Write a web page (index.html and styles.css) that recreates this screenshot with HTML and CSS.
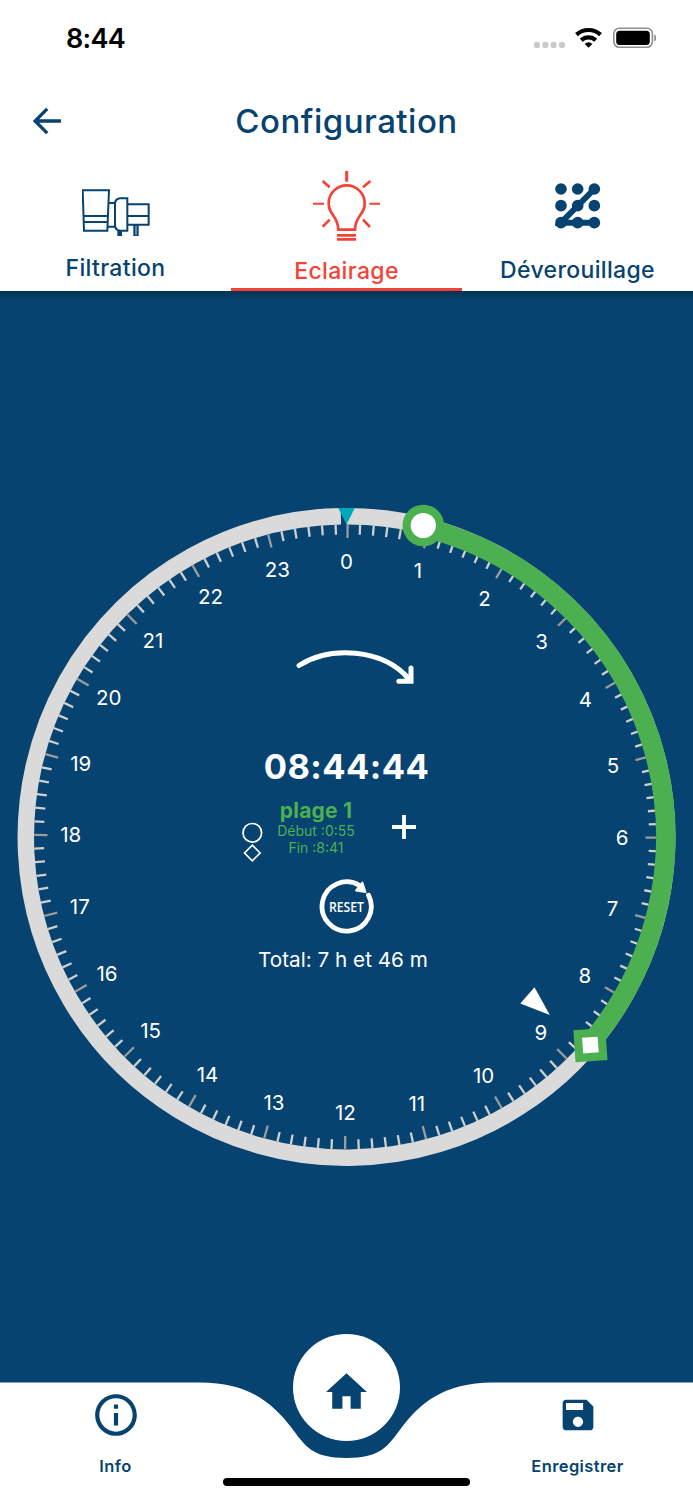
FILE: index.html
```
<!DOCTYPE html>
<html lang="fr">
<head>
  <meta charset="UTF-8">
  <title>Configuration</title>
  <link rel="stylesheet" href="styles.css">
</head>
<body>
  <div class="status-bar">
    <span class="status-time">8:44</span>
    <svg class="status-icons" width="126" height="26" viewBox="0 0 126 26">
      <g fill="#c9c9cb">
        <rect x="4" y="17" width="6" height="6" rx="2"/>
        <rect x="12.3" y="17" width="6" height="6" rx="2"/>
        <rect x="20.6" y="17" width="6" height="6" rx="2"/>
        <rect x="28.9" y="17" width="6" height="6" rx="2"/>
      </g>
      <g fill="none" stroke="#000" stroke-width="4.2">
        <path d="M46.5 9.6a18 18 0 0 1 24 0"/>
        <path d="M51.3 15.3a10.5 10.5 0 0 1 14.4 0"/>
      </g>
      <path d="M58.5 22.8l-3.8-3.9a5.4 5.4 0 0 1 7.6 0z"/>
      <rect x="83.8" y="3.3" width="38.6" height="19" rx="5.5" fill="none" stroke="#8e8e8e" stroke-width="1.6"/>
      <rect x="86.2" y="5.8" width="33.6" height="14.2" rx="3.5"/>
      <path d="M124.3 9.5c3 1.2 3 5.8 0 7z" fill="#8e8e8e"/>
    </svg>
  </div>

  <header class="header">
    <svg class="back" width="28" height="28" viewBox="0 0 28 28">
      <path d="M28 14H2.5M14.2 1.8L2 14l12.2 12.2" fill="none" stroke="currentColor" stroke-width="3.3"/>
    </svg>
    <h1>Configuration</h1>
  </header>

  <nav class="tabs">
    <a class="tab tab-filtration">
      <svg width="68" height="50" viewBox="96 86 204 150">
        <g fill="none" stroke="currentColor" stroke-width="6">
          <path d="M98 93h79l-5 121h-70zM100 170h74M101 188h72"/>
          <path d="M176 131h19M172 202h24"/>
          <path d="M232 117v97h-22q-15-2-15-18v-62q0-15 15-17z"/>
          <path d="M232 135h64v61h-64M232 170h64"/>
        </g>
        <path d="M202 214h14v16h-14zM250 196h16v34h-16z" fill="currentColor"/>
        <path d="M258 200v26" stroke="#7c9cb5" stroke-width="5"/>
      </svg>
      <span>Filtration</span>
    </a>
    <a class="tab tab-eclairage">
      <svg width="68" height="72" viewBox="69 28 204 216">
        <g fill="none" stroke="currentColor" stroke-width="8">
          <path d="M145 207C144 185 137 174 129 163C121 152 116 145 116 128A54 54 0 0 1 224 128C224 145 219 152 211 163C203 174 195 185 195 207Z"/>
          <path d="M141 224h57M141 236h57"/>
          <path d="M170 31v32" stroke-width="9"/>
          <path d="M98 61l21 19M241 61l-22 19M98 198l21-21M240 199l-21-22"/>
          <path d="M69 129h33M238 129h32" stroke-width="6"/>
        </g>
      </svg>
      <span>Eclairage</span>
    </a>
    <a class="tab tab-lock">
      <svg width="46" height="46" viewBox="794 68 138 138">
        <path d="M912 86L812 187H912" fill="none" stroke="currentColor" stroke-width="18"/>
        <g fill="currentColor">
          <circle cx="812" cy="86" r="17.5"/><circle cx="862" cy="86" r="17.5"/><circle cx="912" cy="86" r="17.5"/>
          <circle cx="812" cy="136" r="17.5"/><circle cx="862" cy="136" r="17.5"/><circle cx="912" cy="136" r="17.5"/>
          <circle cx="812" cy="187" r="17.5"/><circle cx="862" cy="187" r="17.5"/><circle cx="912" cy="187" r="17.5"/>
        </g>
      </svg>
      <span>Déverouillage</span>
    </a>
  </nav>

  <main class="main">
    <svg class="dial" width="693" height="693" viewBox="0 490 693 693">
      <path id="track" fill="none" stroke="#dadada" stroke-width="16.5"/>
      <g id="ticks"></g>
      <path id="range" fill="none" stroke="#4caf50" stroke-width="19.5"/>
      <g id="numbers" class="numbers"></g>
      <path d="M338.2 508h16.6l-8.2 16.5z" fill="#00a9b7"/>
      <circle cx="423.3" cy="525.5" r="20.8" fill="#4caf50"/>
      <circle cx="423.3" cy="525.5" r="12.6" fill="#fff"/>
      <g transform="translate(590.4 1045.1) rotate(-4)">
        <rect x="-16" y="-16" width="32" height="32" fill="#4caf50"/>
        <rect x="-7.8" y="-7.8" width="15.6" height="15.6" fill="#fff"/>
      </g>
      <path d="M534.5 987.3L520.3 1003.6L549.8 1015z" fill="#fff"/>
    </svg>

    <section class="info">
      <svg class="direction" width="120" height="38" viewBox="296 648 120 38">
        <path d="M299 665.5C330 646 382 648 409 679M411 668v13.3h-12.2" fill="none" stroke="#fff" stroke-width="5" stroke-linecap="round"/>
      </svg>
      <div class="time">08:44:44</div>
      <div class="range-row">
        <svg class="legend" width="22" height="40" viewBox="0 0 22 40">
          <g fill="none" stroke="#fff" stroke-width="1.7">
            <circle cx="11.3" cy="10.8" r="9.3"/>
            <path d="M11.3 23.2l7.8 7.8-7.8 7.8L3.5 31z"/>
          </g>
        </svg>
        <div class="range">
          <strong>plage 1</strong>
          <span>Début :0:55</span>
          <span>Fin :8:41</span>
        </div>
        <svg class="plus" width="24" height="24" viewBox="0 0 24 24">
          <path d="M12 0v24M0 12h24" stroke="#fff" stroke-width="3.8"/>
        </svg>
      </div>
      <svg class="reset" width="56" height="56" viewBox="0 0 56 56">
        <path d="M49.5 16.2A24.6 24.6 0 1 1 40.5 6.5" fill="none" stroke="#fff" stroke-width="4.8" stroke-linecap="round"/>
        <path d="M43.3 3.5L46.5 13L37 11.5z" fill="#fff" stroke="#fff" stroke-width="2" stroke-linejoin="round"/>
        <text x="27.5" y="33" text-anchor="middle" textLength="35" lengthAdjust="spacingAndGlyphs">RESET</text>
      </svg>
      <div class="total">Total: 7 h et 46 m</div>
    </section>
  </main>

  <footer class="bottom-bar">
    <svg class="bar-shape" width="693" height="180" viewBox="0 0 693 180">
      <path d="M0 62.5H200C250 62.5 273 84 291 107C305 126 312 138 346.5 138C381 138 388 126 402 107C420 84 443 62.5 493 62.5H693V180H0z" fill="#fff"/>
      <circle cx="346.5" cy="67.5" r="53.5" fill="#fff"/>
    </svg>
    <div class="bar-items">
      <a class="bar-item">
        <svg width="50" height="50" viewBox="0 0 24 24" fill="currentColor"><path d="M11 7h2v2h-2zm0 4h2v6h-2zm1-9C6.48 2 2 6.48 2 12s4.48 10 10 10 10-4.48 10-10S17.52 2 12 2zm0 18c-4.41 0-8-3.59-8-8s3.59-8 8-8 8 3.59 8 8-3.59 8-8 8z"/></svg>
        <span>Info</span>
      </a>
      <a class="bar-item home">
        <svg width="49" height="50" viewBox="0 0 24 24" preserveAspectRatio="none" fill="currentColor"><path d="M10 20v-6h4v6h5v-8h3L12 3 2 12h3v8z"/></svg>
      </a>
      <a class="bar-item">
        <svg width="50" height="50" viewBox="-2.65 -2.65 29.3 29.3" fill="currentColor"><path d="M17 3H5c-1.11 0-2 .9-2 2v14c0 1.1.89 2 2 2h14c1.1 0 2-.9 2-2V7l-4-4zm-5 16c-1.66 0-3-1.34-3-3s1.34-3 3-3 3 1.34 3 3-1.34 3-3 3zm3-10H5V5h10v4z"/></svg>
        <span>Enregistrer</span>
      </a>
    </div>
    <div class="home-indicator"></div>
  </footer>

  <script src="dial.js"></script>
</body>
</html>
```
FILE: styles.css
```
* {
  box-sizing: border-box;
}

body {
  margin: 0;
  width: 693px;
  height: 1500px;
  overflow: hidden;
  display: flex;
  flex-direction: column;
  background-color: white;
  color: #064370;
  font-family: Inter, "Liberation Sans", sans-serif;
}

svg {
  display: block;
}

.status-bar {
  height: 76px;
  padding: 25px 37px 0 66px;
  display: flex;
  justify-content: space-between;
}

.status-time {
  color: black;
  font-size: 27px;
  line-height: 27px;
  font-weight: 600;
  letter-spacing: -0.7px;
}

.header {
  height: 89px;
  display: grid;
  grid-template-columns: 100px 1fr 100px;
  align-items: center;
}

.back {
  margin-left: 33px;
}

.header h1 {
  margin: 0;
  text-align: center;
  font-size: 33px;
  font-weight: 450;
  letter-spacing: 0.5px;
}

.tabs {
  height: 126px;
  display: grid;
  grid-template-columns: repeat(3, 1fr);
}

.tab {
  display: flex;
  flex-direction: column;
  align-items: center;
  font-size: 23px;
  line-height: 28px;
  font-weight: 450;
  letter-spacing: 0.35px;
}

.tab-filtration {
  padding-top: 23px;
  gap: 16px;
}

.tab-eclairage {
  padding-top: 5px;
  gap: 15px;
  color: #f44336;
  border-bottom: 3px solid #f44336;
}

.tab-lock {
  padding-top: 18px;
  gap: 27px;
}

.main {
  height: 1091px;
  padding-top: 199px;
  display: grid;
  align-items: start;
  color: white;
  background: linear-gradient(rgba(0, 0, 0, 0.25), transparent 10px) #064370;
}

/* the dial and the texts in its middle share one cell */
.dial,
.info {
  grid-area: 1 / 1;
}

.numbers {
  fill: white;
  font-size: 20.5px;
  text-anchor: middle;
}

.info {
  padding-top: 158px;
  display: flex;
  flex-direction: column;
  align-items: center;
}

.direction {
  margin-left: 19px;
}

.time {
  margin-top: 61px;
  font-size: 34.5px;
  line-height: 40px;
  font-weight: 700;
  letter-spacing: 0.4px;
}

.range-row {
  margin-top: 12px;
  width: 211px;
  height: 60px;
  display: flex;
}

.legend {
  margin-top: 23px;
}

.range {
  width: 106px;
  display: flex;
  flex-direction: column;
  align-items: center;
  color: #4caf50;
  font-size: 14px;
  line-height: 16.5px;
}

.range strong {
  font-size: 21px;
  line-height: 24px;
  letter-spacing: 0.2px;
}

.plus {
  margin: 16px 0 0 23px;
}

.reset {
  margin-top: 20px;
}

.reset text {
  fill: white;
  font-family: "Open Sans", sans-serif;
  font-size: 14px;
  font-weight: 600;
}

.total {
  margin-top: 11px;
  margin-right: 7px;
  font-size: 20.7px;
  line-height: 28px;
}

.bottom-bar {
  height: 180px;
  margin-top: -62px;
  flex-shrink: 0;
  display: grid;
  background-color: #064370;
}

.bar-shape,
.bar-items,
.home-indicator {
  grid-area: 1 / 1;
}

.bar-items {
  display: grid;
  grid-template-columns: repeat(3, 1fr);
  padding-top: 70px;
}

.bar-item {
  display: flex;
  flex-direction: column;
  align-items: center;
  gap: 16px;
  font-size: 16.5px;
  line-height: 20px;
  font-weight: 600;
  letter-spacing: 0.4px;
}

.home {
  margin-top: -23px;
}

.home-indicator {
  align-self: end;
  justify-self: center;
  width: 247px;
  height: 8px;
  margin-bottom: 14px;
  border-radius: 4px;
  background-color: black;
}
```
FILE: dial.js
```
const CX = 346.5;
const CY = 837;
const SVG_NS = "http://www.w3.org/2000/svg";

function point(deg, radius) {
  const rad = deg * Math.PI / 180;
  return [CX + radius * Math.sin(rad), CY - radius * Math.cos(rad)];
}

function arc(from, to, radius) {
  const [x1, y1] = point(from, radius);
  const [x2, y2] = point(to, radius);
  const large = to - from > 180 ? 1 : 0;
  return `M${x1} ${y1}A${radius} ${radius} 0 ${large} 1 ${x2} ${y2}`;
}

function timeToDeg(hours, minutes) {
  return (hours + minutes / 60) * 15;
}

document.getElementById("track").setAttribute("d", arc(0, 359, 320.7));
document.getElementById("range").setAttribute("d", arc(timeToDeg(0, 55), timeToDeg(8, 41), 319.2));

// one tick every 10 minutes, longer and darker on the hour
const ticks = document.getElementById("ticks");
for (let i = 0; i < 144; i++) {
  const isHour = i % 6 === 0;
  const deg = i === 0 ? 0.2 : i * 2.5 * 1.0014;
  const [x1, y1] = point(deg, 312.5);
  const [x2, y2] = point(deg, isHour ? 299 : 302.5);
  const line = document.createElementNS(SVG_NS, "line");
  line.setAttribute("x1", x1);
  line.setAttribute("y1", y1);
  line.setAttribute("x2", x2);
  line.setAttribute("y2", y2);
  line.setAttribute("stroke", isHour ? "#9c9c9c" : "#cfcfcf");
  line.setAttribute("stroke-width", 2.3);
  ticks.appendChild(line);
}

const numbers = document.getElementById("numbers");
for (let h = 0; h < 24; h++) {
  const [x, y] = point(h * 15.02, 275.7);
  const text = document.createElementNS(SVG_NS, "text");
  text.setAttribute("x", x);
  text.setAttribute("y", y + 7.2);
  text.textContent = h;
  numbers.appendChild(text);
}
```
